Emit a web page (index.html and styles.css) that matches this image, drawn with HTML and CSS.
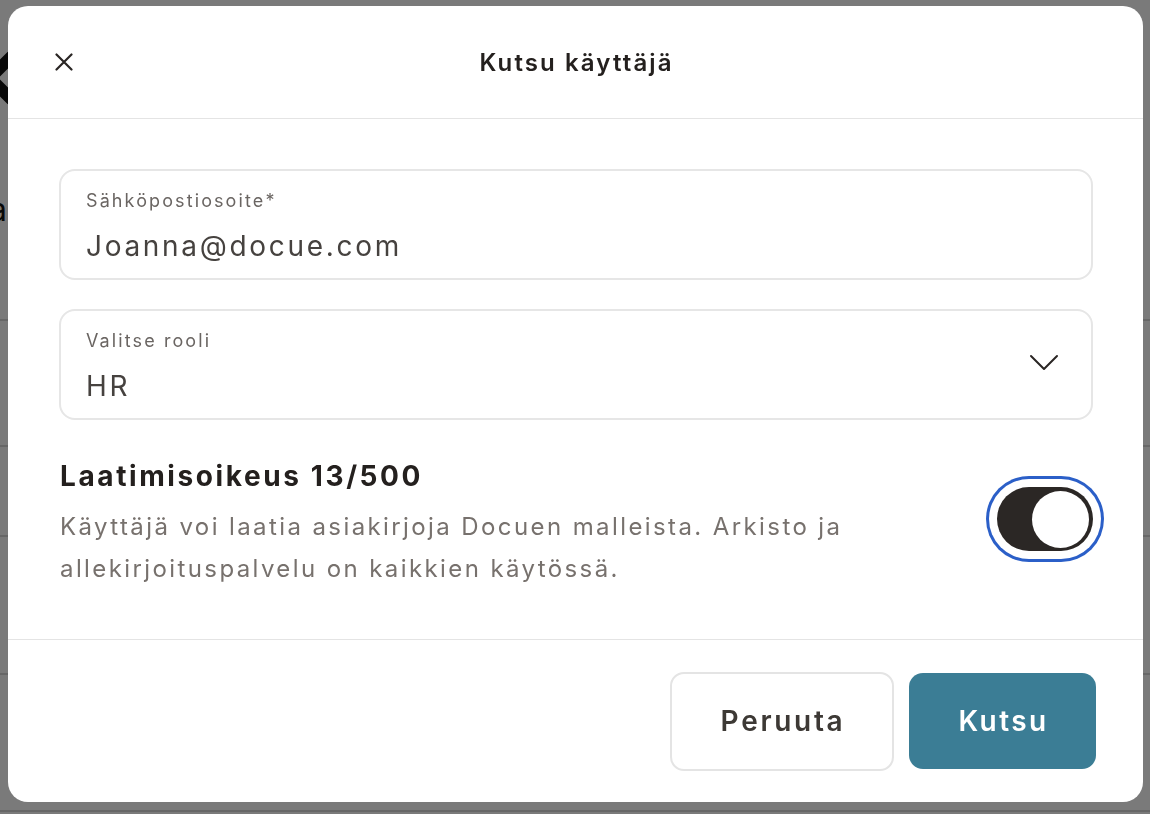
FILE: index.html
```html
<!DOCTYPE html>
<html lang="fi">
<head>
<meta charset="utf-8">
<title>Kutsu käyttäjä</title>
<link rel="stylesheet" href="styles.css">
</head>
<body>
<div class="page">
  <div class="page-top">
    <svg class="page-logo" width="60" height="60" viewBox="0 0 60 60"><path d="M8 8 L52 52 M52 8 L8 52" stroke="#111" stroke-width="12" fill="none"/></svg>
  </div>
  <div class="page-text"><span>Docuen tila</span></div>
  <div class="page-row r1"></div>
  <div class="page-row r2"></div>
  <div class="page-row r3"></div>
  <div class="page-row r4"></div>
  <div class="page-row r5"></div>
</div>

<div class="overlay">
  <div class="modal" role="dialog" aria-labelledby="modal-title">
    <header class="modal-header">
      <button class="close-btn" aria-label="Sulje">
        <svg width="18" height="18" viewBox="0 0 18 18"><path d="M1.5 1.5 L16.5 16.5 M16.5 1.5 L1.5 16.5" stroke="#2a2624" stroke-width="2.2" stroke-linecap="round" fill="none"/></svg>
      </button>
      <h1 id="modal-title" class="modal-title">Kutsu käyttäjä</h1>
    </header>

    <div class="modal-body">
      <div class="field">
        <span class="field-label">Sähköpostiosoite*</span>
        <span class="field-value">Joanna@docue.com</span>
      </div>
      <div class="field field-select">
        <div class="field-text">
          <span class="field-label">Valitse rooli</span>
          <span class="field-value">HR</span>
        </div>
        <svg class="chevron" width="30" height="18" viewBox="0 0 30 18"><path d="M2 2 L15 15 L28 2" stroke="#2a2624" stroke-width="2" fill="none" stroke-linecap="round" stroke-linejoin="round"/></svg>
      </div>

      <div class="permission">
        <div class="permission-text">
          <h2 class="permission-title">Laatimisoikeus 13/500</h2>
          <p class="permission-desc">Käyttäjä voi laatia asiakirjoja Docuen malleista. Arkisto ja allekirjoituspalvelu on kaikkien käytössä.</p>
        </div>
        <div class="toggle" role="switch" aria-checked="true">
          <span class="toggle-knob"></span>
        </div>
      </div>
    </div>

    <footer class="modal-footer">
      <button class="btn btn-secondary">Peruuta</button>
      <button class="btn btn-primary">Kutsu</button>
    </footer>
  </div>
</div>
</body>
</html>
```

FILE: styles.css
```css
* { box-sizing: border-box; }

html, body {
  margin: 0;
  padding: 0;
  width: 1150px;
  height: 814px;
  overflow: hidden;
}

body {
  font-family: Inter, "Noto Sans", sans-serif;
  background: #ffffff;
}

/* Background page (behind the overlay) */
.page {
  width: 1150px;
  height: 814px;
  background: #ffffff;
}

.page-top {
  height: 190px;
  padding: 48px 0 0 0;
  margin-left: -40px;
}

.page-logo { display: block; }

.page-text {
  width: 8px;
  height: 129px;
  display: flex;
  justify-content: flex-end;
  white-space: nowrap;
  font-size: 32px;
  line-height: 40px;
  color: #111;
  letter-spacing: 1px;
}

.page-row {
  border-bottom: 2px solid #d8d8d8;
}

.r1 { height: 0; }
.r2 { height: 126px; }
.r3 { height: 90px; }
.r4 { height: 138px; }
.r5 { height: 137px; }

/* Overlay */
.overlay {
  position: fixed;
  inset: 0;
  background: rgba(0, 0, 0, 0.52);
  display: flex;
  align-items: flex-start;
  justify-content: flex-start;
  padding: 6px 7px 12px 8px;
}

.modal {
  width: 1135px;
  height: 796px;
  background: #ffffff;
  border-radius: 20px;
  display: flex;
  flex-direction: column;
  overflow: hidden;
}

.modal-header {
  height: 113px;
  border-bottom: 1.5px solid #e4e4e4;
  display: flex;
  align-items: center;
  justify-content: center;
  position: relative;
  flex-shrink: 0;
}

.close-btn {
  position: absolute;
  left: 47px;
  top: 47px;
  width: 18px;
  height: 18px;
  padding: 0;
  border: 0;
  background: none;
  display: flex;
}

.modal-title {
  margin: 0 0 0 2px;
  font-size: 24px;
  font-weight: 600;
  color: #24201e;
  letter-spacing: 2.1px;
}

.modal-body {
  padding: 50px 50px 0 51px;
  display: flex;
  flex-direction: column;
  gap: 29px;
  flex: 1;
}

.field {
  height: 111px;
  border: 2px solid #e6e6e6;
  border-radius: 16px;
  padding: 16px 25px 0 25px;
  display: flex;
  flex-direction: column;
}

.field-select {
  flex-direction: row;
  align-items: flex-start;
  justify-content: space-between;
  padding-right: 32px;
}

.field-text {
  display: flex;
  flex-direction: column;
}

.field-label {
  font-size: 18px;
  line-height: 28px;
  color: #6a6562;
  letter-spacing: 2.1px;
}

.field-value {
  font-size: 28px;
  line-height: 40px;
  margin-top: 11px;
  color: #46423f;
  letter-spacing: 2.7px;
}

.chevron {
  margin-top: 27px;
}

.permission {
  margin-top: 7px;
  display: flex;
  align-items: flex-start;
  justify-content: space-between;
}

.permission-text {
  margin-left: 1px;
}

.permission-title {
  margin: 0;
  font-size: 28px;
  line-height: 40px;
  font-weight: 700;
  color: #24201e;
  letter-spacing: 2.6px;
}

.permission-desc {
  margin: 10px 0 0 0;
  width: 840px;
  font-size: 24px;
  line-height: 42px;
  color: #77716d;
  letter-spacing: 2.4px;
}

.toggle {
  width: 96px;
  height: 64px;
  margin-top: 31px;
  background: #2b2725;
  border-radius: 32px;
  box-shadow: 0 0 0 8px #ffffff, 0 0 0 11px #2b5fc8;
  display: flex;
  align-items: center;
  justify-content: flex-end;
  padding-right: 4px;
  flex-shrink: 0;
}

.toggle-knob {
  width: 57px;
  height: 57px;
  border-radius: 50%;
  background: #ffffff;
}

.modal-footer {
  height: 163px;
  border-top: 1.5px solid #e4e4e4;
  display: flex;
  align-items: center;
  justify-content: flex-end;
  gap: 15px;
  padding: 0 47px 0 0;
  flex-shrink: 0;
}

.btn {
  font-family: inherit;
  font-size: 28px;
  font-weight: 600;
  border-radius: 14px;
  cursor: pointer;
  padding: 0 0 0 2px;
}

.btn-secondary {
  width: 224px;
  height: 99px;
  background: #ffffff;
  border: 2px solid #e4e4e4;
  color: #3d3935;
  letter-spacing: 2.7px;
}

.btn-primary {
  width: 187px;
  height: 96px;
  background: #3b7d95;
  border: 0;
  color: #ffffff;
  letter-spacing: 2.4px;
}
```
